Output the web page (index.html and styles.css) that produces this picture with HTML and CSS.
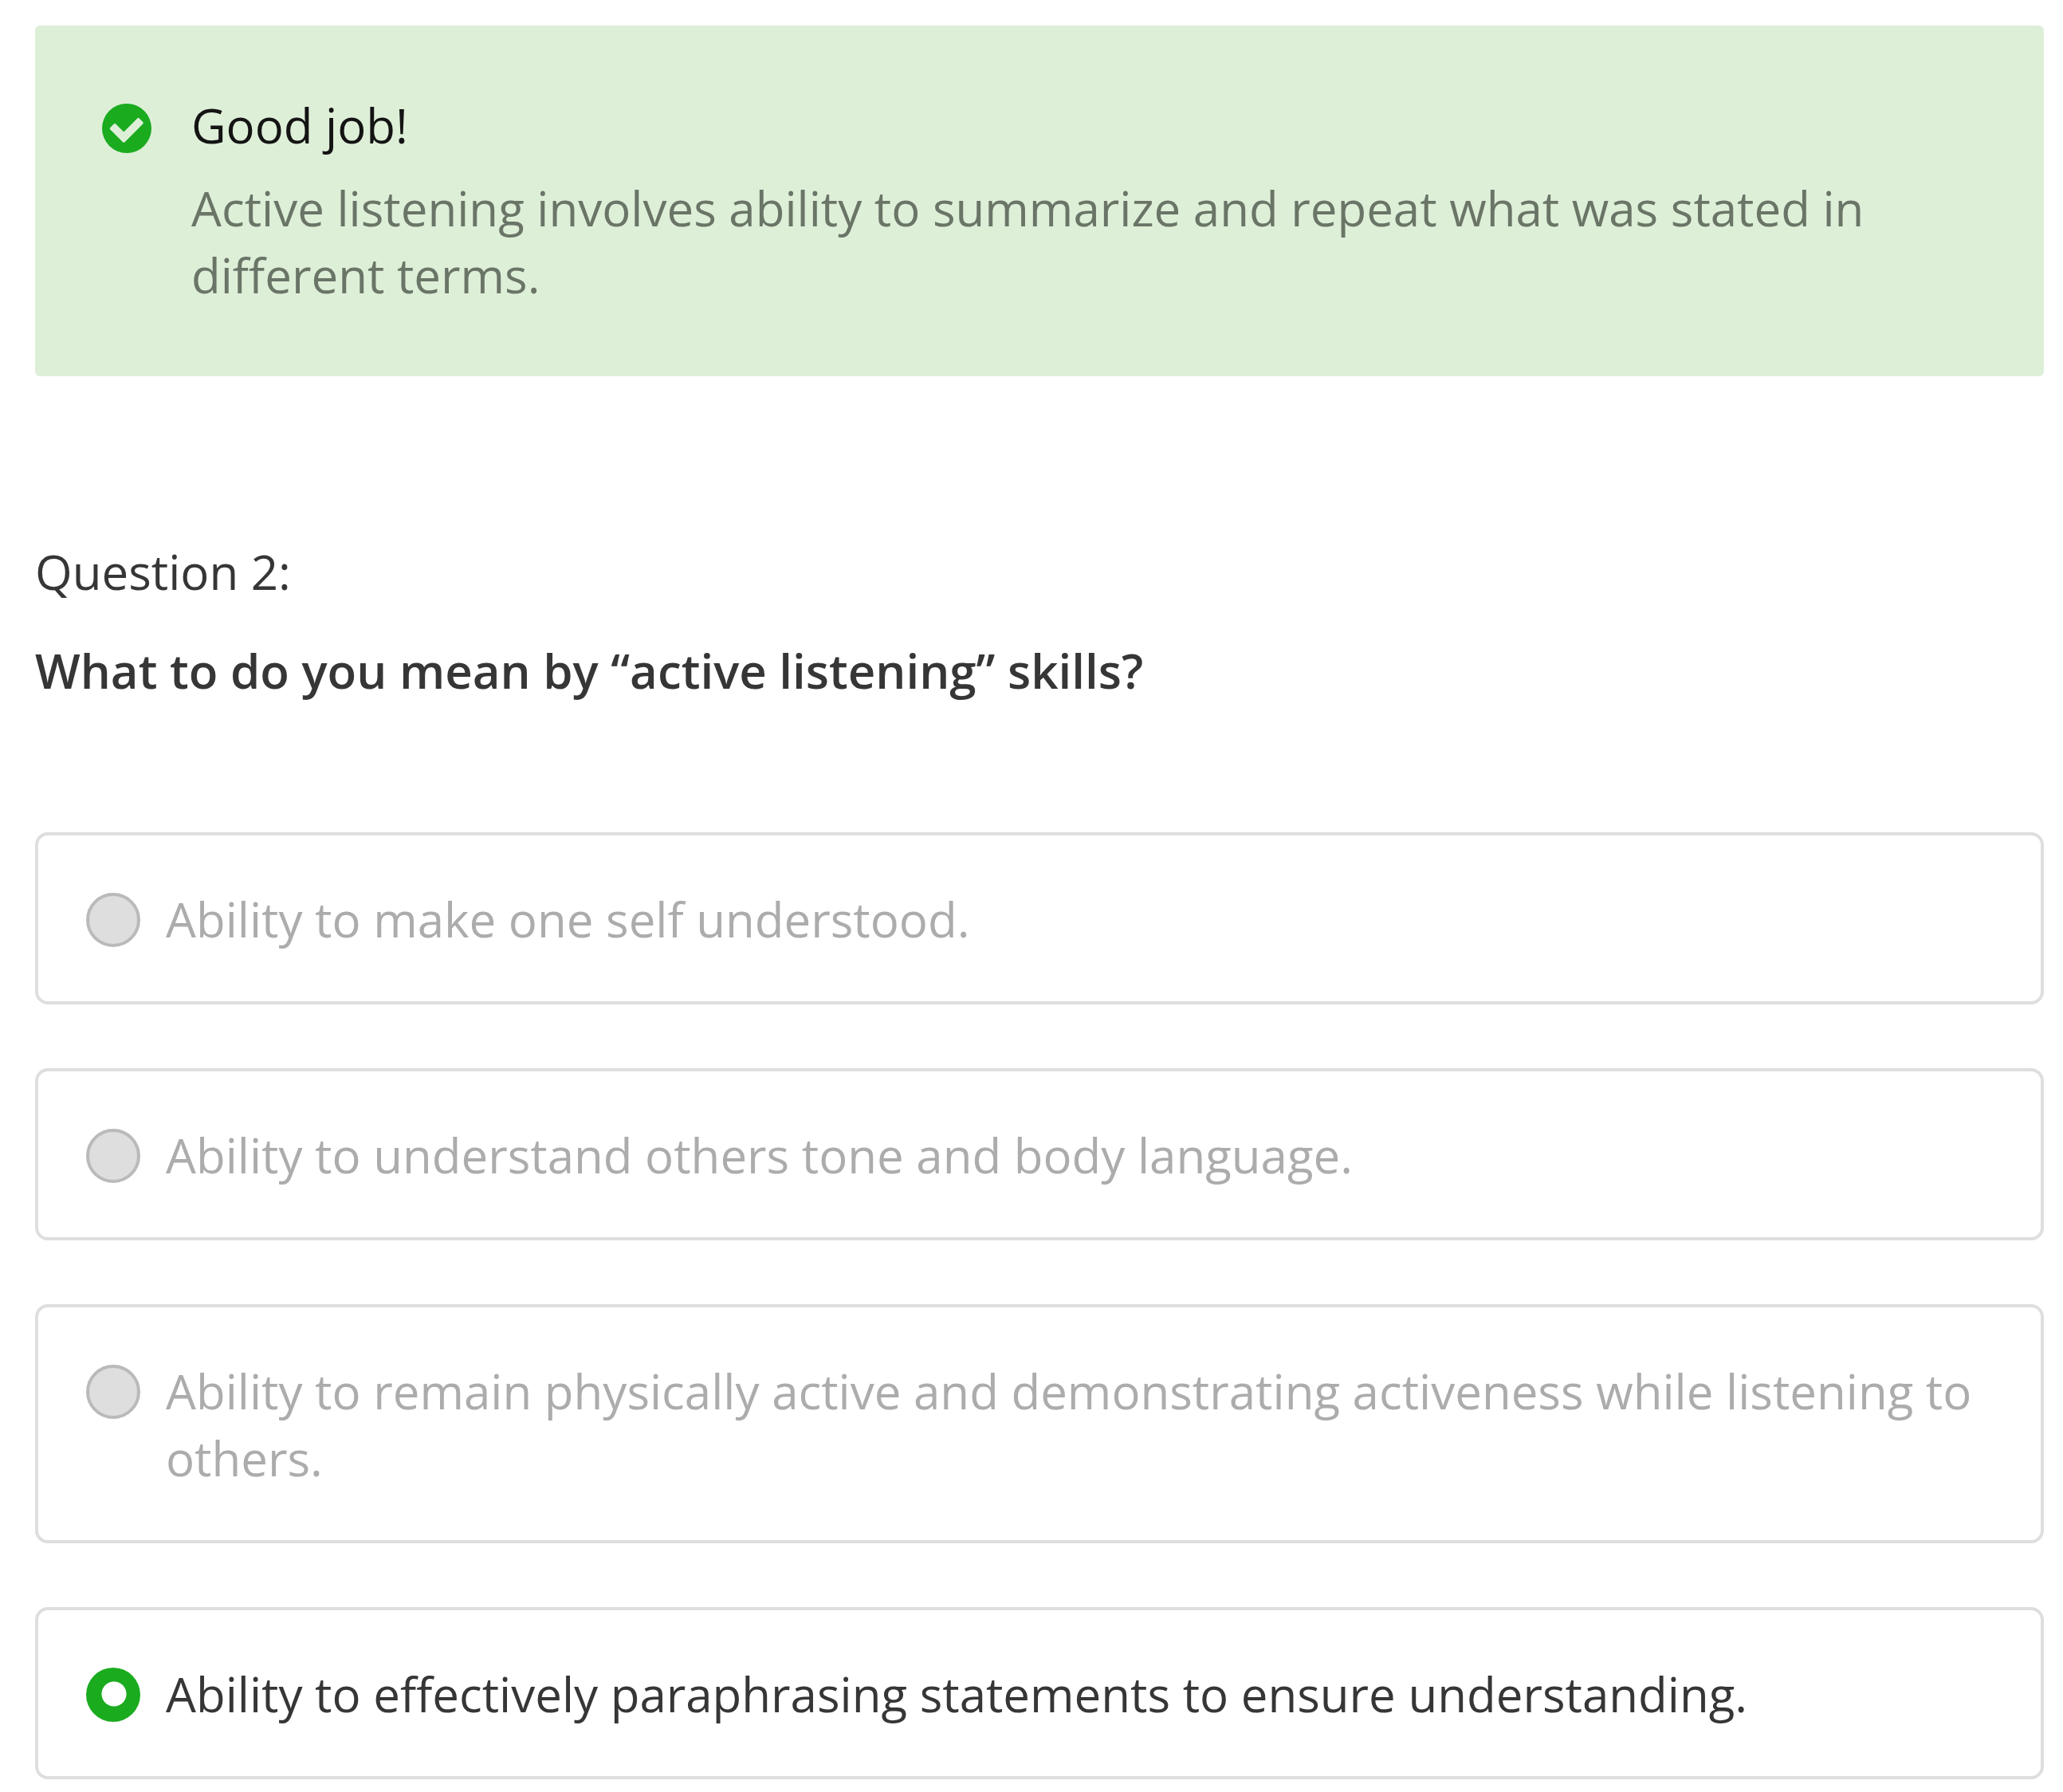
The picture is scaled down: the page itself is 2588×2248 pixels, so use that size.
FILE: index.html
```html
<!DOCTYPE html>
<html lang="en">
<head>
<meta charset="utf-8">
<meta name="viewport" content="width=device-width, initial-scale=1">
<title>Question 2</title>
<link rel="stylesheet" href="styles.css">
</head>
<body>
<main class="quiz">
  <section class="feedback" role="status">
    <svg class="feedback-icon" viewBox="0 0 62 62" aria-hidden="true">
      <circle cx="31" cy="31" r="31" fill="#1aab1e"/>
      <path d="M11.500 31.200 L16 26.800 L27.300 38 L45.500 19.700 L50 24.200 L27.300 47 Z" fill="#deefd8" stroke="#deefd8" stroke-width="3.500" stroke-linejoin="round"/>
    </svg>
    <div>
      <h2 class="feedback-title">Good job!</h2>
      <p class="feedback-text">Active listening involves ability to summarize and repeat what was stated in different terms.</p>
    </div>
  </section>
  <form>
    <fieldset class="question">
      <legend class="prompt">
        <span class="number">Question 2:</span>
        <span class="title">What to do you mean by “active listening” skills?</span>
      </legend>
      <label class="answer"><input class="radio" type="radio" name="answer" disabled><span>Ability to make one self understood.</span></label>
      <label class="answer"><input class="radio" type="radio" name="answer" disabled><span>Ability to understand others tone and body language.</span></label>
      <label class="answer"><input class="radio" type="radio" name="answer" disabled><span>Ability to remain physically active and demonstrating activeness while listening to others.</span></label>
      <label class="answer chosen"><input class="radio" type="radio" name="answer" checked><span>Ability to effectively paraphrasing statements to ensure understanding.</span></label>
    </fieldset>
  </form>
</main>
</body>
</html>
```
FILE: styles.css
```css
* { box-sizing: border-box; }
body {
  margin: 0;
  background: #fff;
  color: #363636;
  font: 400 60px/84px "Open Sans", sans-serif;
}
.quiz { padding: 32px 24px 16px 44px; }
.feedback {
  display: flex;
  gap: 50px;
  padding: 83px 84px 85px;
  border-radius: 6px;
  background: #deefd8;
}
.feedback-icon { flex: none; width: 62px; height: 62px; margin-top: 15px; }
.feedback-title { margin: 0 0 20px; color: #141414; font-size: 60px; font-weight: 400; }
.feedback-text { margin: 0; color: #6a7567; }
.question {
  display: flex;
  flex-direction: column;
  gap: 80px;
  min-width: 0;
  margin: 203px 0 0;
  padding: 0;
  border: 0;
}
.prompt { padding: 0; margin-bottom: 161px; }
.number, .title { display: block; }
.title { margin-top: 40px; font-weight: 600; }
.answer {
  display: flex;
  gap: 32px;
  padding: 63px 60px 61px;
  border: 4px solid #dedede;
  border-radius: 16px;
  color: #acacac;
}
.chosen { color: #363636; }
.radio {
  appearance: none;
  flex: none;
  width: 68px;
  height: 68px;
  margin: 9px 0 0;
  border: 4px solid #bababa;
  border-radius: 50%;
  background: #dedede;
}
.radio:checked {
  border: 0;
  background: radial-gradient(circle at 35px 33px, #fff 15px, #1aab1e 16px);
}
```
